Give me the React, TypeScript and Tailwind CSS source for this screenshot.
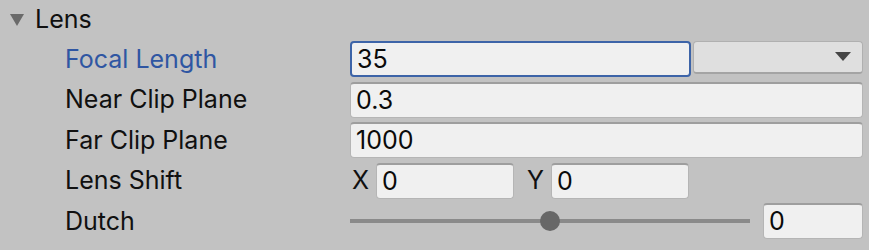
import React from 'react';

const font = { fontFamily: 'Inter, "Noto Sans", sans-serif' };

function Field({ value, focused = false, className = '' }: { value: string; focused?: boolean; className?: string }) {
  return (
    <div
      className={
        'h-[36px] rounded-[4px] bg-[#f0f0f0] flex items-center pl-[5px] text-[25px] text-[#0a0a0a] ' +
        (focused
          ? 'border-2 border-[#3d64a8] '
          : 'border border-[#b5b5b5] border-t-2 border-t-[#9e9e9e] ') +
        className
      }
    >
      {value}
    </div>
  );
}

function Row({ label, blue = false, children }: { label: string; blue?: boolean; children: React.ReactNode }) {
  return (
    <div className="h-[40.5px] flex items-center">
      <div className={'w-[350px] shrink-0 pl-[65px] text-[25px] ' + (blue ? 'text-[#2f56a2]' : 'text-[#101010]')}>{label}</div>
      <div className="flex-1 flex items-center pr-[6px]">{children}</div>
    </div>
  );
}

export default function App() {
  return (
    <div className="w-[869px] h-[250px] bg-[#c2c2c2] overflow-hidden" style={font}>
      {/* Foldout header */}
      <div className="h-[39px] flex items-center">
        <svg width="16" height="16" viewBox="0 0 16 16" className="ml-[9px] mr-[10px]">
          <polygon points="1,2 15,2 8,14" fill="#6a6a6a" />
        </svg>
        <span className="text-[25px] text-[#101010]">Lens</span>
      </div>

      <Row label="Focal Length" blue>
        <Field value="35" focused className="w-[341px]" />
        <div className="ml-[2px] flex-1 h-[33px] rounded-[4px] bg-[#dfdfdf] border border-[#b0b0b0] border-b-2 border-b-[#a4a4a4] flex items-center justify-end pr-[11px] -mt-[4px]">
          <svg width="16" height="10" viewBox="0 0 16 10">
            <polygon points="0,0 16,0 8,9" fill="#454545" />
          </svg>
        </div>
      </Row>

      <Row label="Near Clip Plane">
        <Field value="0.3" className="flex-1" />
      </Row>

      <Row label="Far Clip Plane">
        <Field value="1000" className="flex-1" />
      </Row>

      <Row label="Lens Shift">
        <span className="text-[25px] text-[#101010] w-[26px] pl-[2px]">X</span>
        <Field value="0" className="w-[138px]" />
        <span className="text-[25px] text-[#101010] w-[37px] pl-[13px]">Y</span>
        <Field value="0" className="w-[138px]" />
      </Row>

      <Row label="Dutch">
        <div className="relative w-[400px] h-[22px] flex items-center">
          <div className="w-full h-[4px] bg-[#8a8a8a]" />
          <div className="absolute left-[190px] top-[1px] w-[20px] h-[20px] rounded-full bg-[#676767]" />
        </div>
        <div className="w-[13px] shrink-0" />
        <Field value="0" className="flex-1" />
      </Row>
    </div>
  );
}
